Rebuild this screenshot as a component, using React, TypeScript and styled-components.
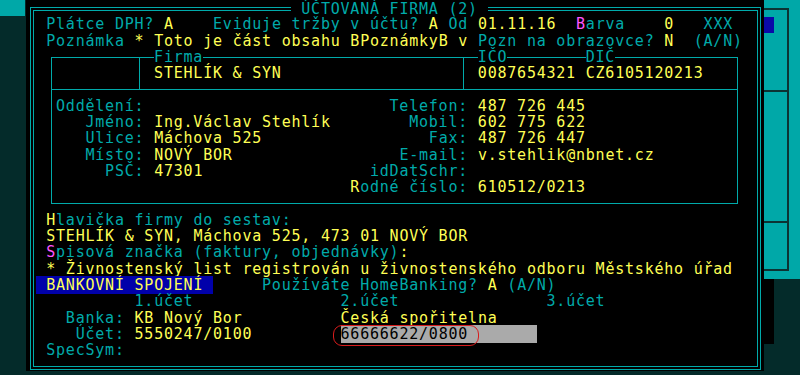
import React from "react";
import styled, { createGlobalStyle, css } from "styled-components";

// text-mode grid: one char cell is CW wide, RH high (23 rows on the screen)
const CW = 9.81;
const RH = 375 / 23;

const CYAN = "#00aaaa";
const YELLOW = "#ffff55";
const MAGENTA = "#ff55ff";
const BLUE = "#0000aa";
const GRAY = "#aaaaaa";
const DARK = "#042b2a";
const TEAL = "#00a8a8";
const RAIL = "#0c3333";

type Tone = "c" | "y" | "m" | "t" | "hl" | "field";
type Piece = [number, string, Tone];

const tones: Record<Tone, { fg: string; bg: string }> = {
  c: { fg: CYAN, bg: "transparent" },
  y: { fg: YELLOW, bg: "transparent" },
  m: { fg: MAGENTA, bg: "transparent" },
  t: { fg: CYAN, bg: "#000" },
  hl: { fg: YELLOW, bg: BLUE },
  field: { fg: "#000", bg: GRAY },
};

const GlobalStyle = createGlobalStyle`
  html, body {
    margin: 0;
    padding: 0;
    background: ${DARK};
  }
  body {
    font-family: "DejaVu Sans Mono", "Liberation Mono", monospace;
  }
`;

function Line({ from, pieces, lift, title }: { from: number; pieces: Piece[]; lift?: boolean; title?: boolean }) {
  let col = from;
  const out: React.ReactNode[] = [];
  pieces.forEach(([at, text, tone], i) => {
    if (at > col) out.push(<React.Fragment key={"g" + i}>{" ".repeat(at - col)}</React.Fragment>);
    out.push(
      <Seg key={i} $tone={tone}>
        {text}
        {tone === "field" && <Ring />}
      </Seg>
    );
    col = at + Array.from(text).length;
  });
  return (
    <Row $lift={lift} $title={title}>
      {out}
    </Row>
  );
}

const top: Piece[][] = [
  [
    [4, "Plátce DPH?", "c"], [16, "A", "y"], [21, "Eviduje tržby v účtu?", "c"], [43, "A", "y"],
    [45, "Od", "c"], [48, "01.11.16", "y"], [58, "B", "m"], [59, "arva", "c"], [67, "0", "y"], [71, "XXX", "c"],
  ],
  [
    [4, "Poznámka", "c"], [13, "*", "y"], [15, "Toto je část obsahu BPoznámkyB v", "y"],
    [48, "Pozn na obrazovce?", "c"], [67, "N", "y"], [70, "(A/N)", "c"],
  ],
];

const person: Piece[][] = [
  [[5, "Oddělení:", "c"], [39, "Telefon:", "c"], [48, "487 726 445", "y"]],
  [[8, "Jméno:", "c"], [15, "Ing.Václav Stehlík", "y"], [41, "Mobil:", "c"], [48, "602 775 622", "y"]],
  [[8, "Ulice:", "c"], [15, "Máchova 525", "y"], [43, "Fax:", "c"], [48, "487 726 447", "y"]],
  [[8, "Místo:", "c"], [15, "NOVÝ BOR", "y"], [40, "E-mail:", "c"], [48, "v.stehlik@nbnet.cz", "y"]],
  [[10, "PSČ:", "c"], [15, "47301", "y"], [37, "idDatSchr:", "c"]],
  [[35, "R", "y"], [36, "odné číslo:", "c"], [48, "610512/0213", "y"]],
];

const bottom: Piece[][] = [
  [[4, "H", "y"], [5, "lavička firmy do sestav:", "c"]],
  [[4, "STEHLÍK & SYN, Máchova 525, 473 01 NOVÝ BOR", "y"]],
  [[4, "S", "m"], [5, "pisová značka (faktury, objednávky)", "c"], [40, ":", "y"]],
  [[4, "* Živnostenský list registrován u živnostenského odboru Městského úřad", "y"]],
  [[3, " BANKOVNÍ SPOJENÍ ", "hl"], [26, "Používáte HomeBanking?", "c"], [49, "A", "y"], [51, "(A/N)", "c"]],
  [[13, "1.účet", "c"], [34, "2.účet", "c"], [55, "3.účet", "c"]],
  [[6, "Banka:", "c"], [13, "KB Nový Bor", "y"], [34, "Česká spořitelna", "y"]],
  [[7, "Účet:", "c"], [13, "5550247/0100", "y"], [34, "66666622/0800       ", "field"]],
  [[4, "SpecSym:", "c"]],
];

export default function App() {
  return (
    <>
      <GlobalStyle />
      <Screen>
        <LeftStrip>
          <Tab />
        </LeftStrip>
        <Window>
          <Frame>
            <Content>
              <Line title from={3} pieces={[[29, " ÚČTOVANÁ FIRMA (2) ", "t"]]} />
              {top.map((p, i) => (
                <Line key={i} from={3} pieces={p} />
              ))}
              <FirmBox>
                <BoxHead>
                  <HeadCell $first $w={9 * CW - 1} />
                  <HeadCell $w={33 * CW}>
                    <Line lift from={15} pieces={[[15, "Firma", "t"]]} />
                    <Line from={15} pieces={[[15, "STEHLÍK & SYN", "y"]]} />
                  </HeadCell>
                  <HeadCell>
                    <Line lift from={48} pieces={[[48, "IČO", "t"], [59, "DIČ", "t"]]} />
                    <Line from={48} pieces={[[48, "0087654321", "y"], [59, "CZ6105120213", "y"]]} />
                  </HeadCell>
                </BoxHead>
                <BoxBody>
                  {person.map((p, i) => (
                    <Line key={i} from={5} pieces={p} />
                  ))}
                </BoxBody>
              </FirmBox>
              {bottom.map((p, i) => (
                <Line key={i} from={3} pieces={p} />
              ))}
            </Content>
          </Frame>
        </Window>
        <RightPanel>
          <TealArea>
            <Rail>
              <RailPart $h={80}>
                <Thumb />
              </RailPart>
              <RailPart $h={131} $split />
              <RailPart $split />
            </Rail>
          </TealArea>
          <Shade>
            <ShadeEdge />
          </Shade>
        </RightPanel>
      </Screen>
    </>
  );
}

const Screen = styled.div`
  display: flex;
  width: 800px;
  height: 375px;
  overflow: hidden;
  background: ${DARK};
`;

const LeftStrip = styled.div`
  flex: none;
  width: 26px;
  display: flex;
  flex-direction: column;
`;

const Tab = styled.div`
  width: 25px;
  height: 16px;
  background: ${TEAL};
`;

const Window = styled.div`
  flex: none;
  width: 738px;
  height: 371px;
  padding-top: 7px;
  box-sizing: border-box;
  background: #000;
`;

const Frame = styled.div`
  margin: 0 3px 0 4px;
  height: 363px;
  border: 4px double ${CYAN};
  box-sizing: border-box;
`;

const Content = styled.div`
  margin-top: -11px;
  padding-left: ${7 + 3 * CW - 34}px;
`;

const Row = styled.div<{ $lift?: boolean; $title?: boolean }>`
  height: ${RH}px;
  line-height: ${RH}px;
  margin-top: ${(p) => (p.$lift ? -(RH / 2 + 0.5) : 0)}px;
  font-size: 15px;
  letter-spacing: 0.779px;
  white-space: pre;
  ${(p) =>
    p.$title &&
    css`
      & > span {
        display: inline-block;
        vertical-align: top;
        height: ${RH - 1}px;
        line-height: ${RH - 4}px;
        padding-top: 3px;
        box-sizing: border-box;
      }
    `}
`;

const Seg = styled.span<{ $tone: Tone }>`
  position: ${(p) => (p.$tone === "field" ? "relative" : "static")};
  color: ${(p) => tones[p.$tone].fg};
  background: ${(p) => tones[p.$tone].bg};
`;

const Ring = styled.span`
  position: absolute;
  left: -7.5px;
  top: 0.5px;
  width: 146px;
  height: 21px;
  border: 1.5px solid #d81c1c;
  border-radius: 9px;
  box-sizing: border-box;
  pointer-events: none;
`;

const FirmBox = styled.div`
  margin: ${RH / 2 - 0.5}px 0 ${RH / 2 - 0.5}px ${1.5 * CW - 0.5}px;
  width: ${70 * CW + 1}px;
  border: 1px solid ${CYAN};
  box-sizing: border-box;
`;

const BoxHead = styled.div`
  display: flex;
  height: ${2 * RH}px;
  border-bottom: 1px solid ${CYAN};
  box-sizing: border-box;
`;

const HeadCell = styled.div<{ $w?: number; $first?: boolean }>`
  flex: ${(p) => (p.$w ? "none" : "1")};
  width: ${(p) => (p.$w ? `${p.$w}px` : "auto")};
  border-left: ${(p) => (p.$first ? "none" : `1px solid ${CYAN}`)};
  padding-left: ${1.5 * CW - 0.5}px;
  box-sizing: border-box;
`;

const BoxBody = styled.div`
  padding: ${RH / 2 - 0.5}px 0 ${RH / 2 - 0.5}px ${0.5 * CW - 0.5}px;
`;

const RightPanel = styled.div`
  flex: 1;
  display: flex;
  flex-direction: column;
`;

const TealArea = styled.div`
  height: 279px;
  padding-top: 8px;
  box-sizing: border-box;
  background: ${TEAL};
`;

const Rail = styled.div`
  width: 25px;
  height: 263px;
  display: flex;
  flex-direction: column;
  border: 2px solid ${RAIL};
  border-left: none;
  box-sizing: border-box;
`;

const RailPart = styled.div<{ $h?: number; $split?: boolean }>`
  flex: ${(p) => (p.$h ? "none" : "1")};
  height: ${(p) => (p.$h ? `${p.$h}px` : "auto")};
  border-top: ${(p) => (p.$split ? `2px solid ${RAIL}` : "none")};
  box-sizing: border-box;
`;

const Thumb = styled.div`
  width: 10px;
  height: 16px;
  margin-top: 7px;
  background: #0a0aa8;
`;

const Shade = styled.div`
  flex: 1;
  background: ${DARK};
`;

const ShadeEdge = styled.div`
  width: 10px;
  height: 65px;
  background: #000;
`;
